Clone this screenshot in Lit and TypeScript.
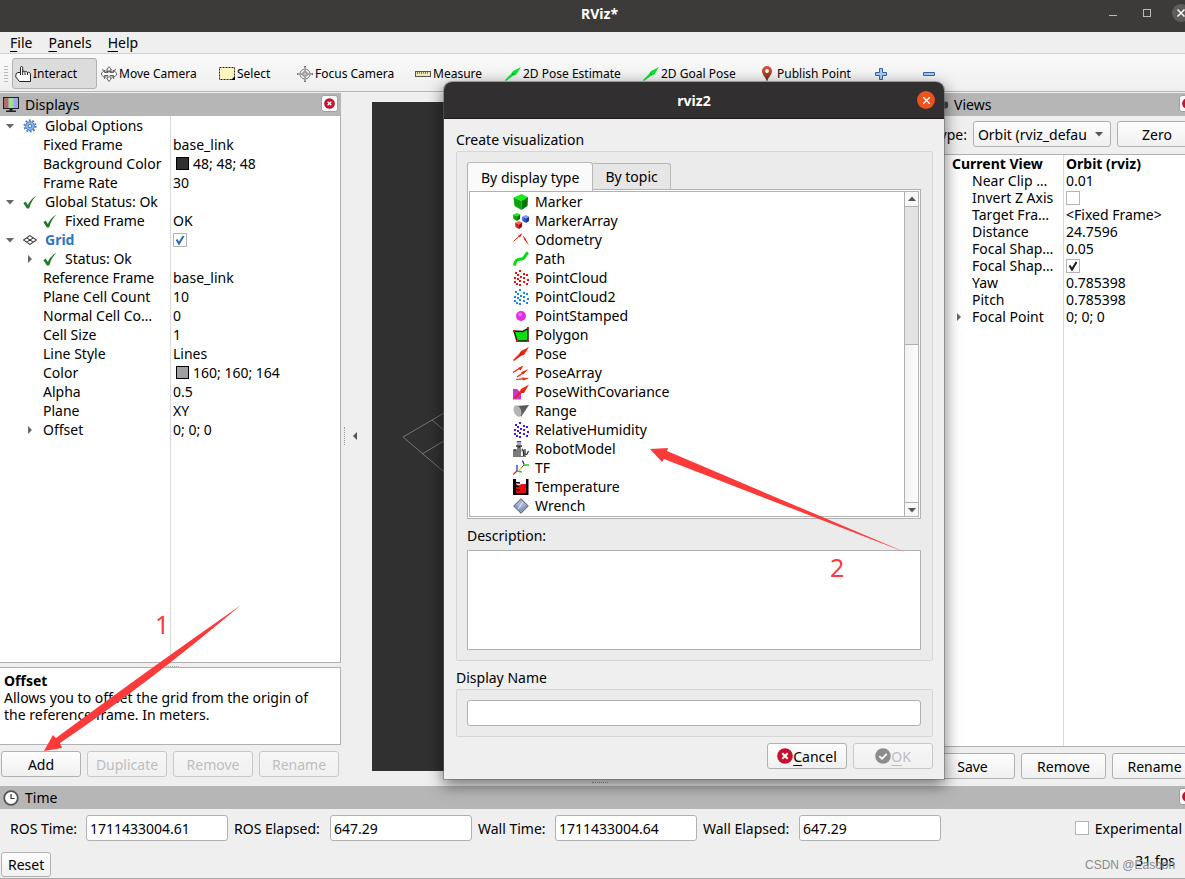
import { LitElement, html, css, svg, nothing, type TemplateResult } from "lit";
import { customElement, property } from "lit/decorators.js";
import { classMap } from "lit/directives/class-map.js";

type Art = TemplateResult;
const icon = (art: Art, box = "0 0 16 16") =>
  html`<svg class="ico" viewBox=${box} aria-hidden="true">${art}</svg>`;

const dots = (color: string): Art =>
  svg`<g fill=${color}>${[
    [7, 1], [3, 3], [11, 4], [5, 5], [14, 5], [8, 7], [2, 8], [11, 8], [5, 9],
    [15, 10], [2, 12], [7, 11], [11, 12], [14, 14], [7, 15], [4, 14],
  ].map(([x, y]) => svg`<rect x=${x - 1} y=${y - 1} width="2" height="2"/>`)}</g>`;

const cube = (x: number, y: number, s: number, a: string, b: string, c: string): Art =>
  svg`<g transform="translate(${x} ${y}) scale(${s})"><path fill=${a} d="M0 3.500 8 0l6.500 3L8 7z"/><path fill=${b} d="M0 3.500 8 7v9l-7-4z"/><path fill=${c} d="M8 7l6.500-4-.5 9-6 4z"/></g>`;

const dart = (color: string): Art =>
  svg`<path fill=${color} d="M0 14 6 8 8 5 16 1 11 9 8.500 9.500 1 15z"/><path stroke="#00000055" fill="none" d="M7 7.500 9 9"/>`;

const art: Record<string, Art> = {
  hand: svg`<path fill="#fff" stroke="#222" stroke-width="1" stroke-linejoin="round" d="M5.500 9V1.800Q5.500.5 6.600.5T7.700 1.800V6Q8 4.800 9 5t1 1.200Q10.500 5 11.500 5.500t.8 1.200Q13 5.800 14.500 6.500 15.500 7 15.500 9v6.500h-11L.8 11V9.500Q.6 7 3 6.500h2.500V9"/><path stroke="#222" d="M7.700 6v3M10 6.500V9M12.500 7v2"/>`,
  move: svg`<g fill="#fff" stroke="#555" stroke-width=".9"><path d="M8 .6 10.500 4H9v2.500h3.500V4.500L15.500 7v2l-3 2.500V9.500H9V12h1.500L8 15.500 5.500 12H7V9.500H3.500v2L.5 9V7l3-2.500v2H7V4H5.500z"/><path fill="none" d="M1 3.500Q8 8 15 3.500M3 13l3-4M13 13l-3-4"/></g>`,
  select: svg`<rect x=".5" y="1.500" width="15" height="12" fill="#fbf4bc" stroke="#222" stroke-dasharray="2 1"/><path d="M16 10v4h-4z"/>`,
  focus: svg`<g fill="none" stroke="#777"><circle cx="8" cy="8" r="5"/><circle cx="8" cy="8" r="2.500"/><path stroke-width="2" d="M8 0v16M0 8h16"/></g><path stroke="#fff" stroke-width=".7" d="M8 1v14M1 8h14"/>`,
  ruler: svg`<rect x=".5" y="5.500" width="15" height="5" fill="#f2e7b3" stroke="#555"/><path stroke="#555" stroke-width=".8" d="M2.500 6v2M4.500 6v1.500M6.500 6v2M8.500 6v1.500M10.500 6v2M12.500 6v1.500"/>`,
  green: dart("#0be335"),
  pin: svg`<defs><linearGradient id="p" x2="0" y2="1"><stop stop-color="#e8553a"/><stop offset="1" stop-color="#5c2a16"/></linearGradient></defs><path fill="url(#p)" d="M8 0a5 5 0 0 1 5 5C13 9 9 11 8 16 7 11 3 9 3 5a5 5 0 0 1 5-5z"/><circle cx="8" cy="5" r="1.900" fill="#fff"/>`,
  plus: svg`<path fill="#a9c8ec" stroke="#3465a4" d="M6.500 2.500h3v4h4v3h-4v4h-3v-4h-4v-3h4z"/>`,
  minus: svg`<path fill="#a9c8ec" stroke="#3465a4" d="M2.500 6.500h11v3h-11z"/>`,
  monitor: svg`<rect x=".5" y=".5" width="15" height="11" fill="#9de09a" stroke="#222"/><path fill="#b56a6a" d="M1 1h4.500v10H1z"/><path fill="#a4a4ec" d="M10.500 1H15v10h-4.500z"/><path fill="#222" d="M6.500 12h3v1.500H13V15H3v-1.500h3.500z"/>`,
  gear: svg`<circle cx="8" cy="8" r="5" fill="#8db5e6" stroke="#3e74b8"/><circle cx="8" cy="8" r="6.500" fill="none" stroke="#3e74b8" stroke-width="2" stroke-dasharray="2.040 2.040"/><circle cx="8" cy="8" r="2" fill="#dcebfb" stroke="#3e74b8"/>`,
  ok: svg`<path fill="#1f7a25" d="M.5 9.500 3 7.500l2.500 4Q9 4 15.500.5 9.500 6 7 15.500H4.500z"/>`,
  grid: svg`<g fill="none" stroke="#333" stroke-width="1.200"><path d="M8 3 15.500 8 8 13 .5 8zM4.300 5.500l7.500 5M11.700 5.500l-7.500 5"/></g>`,
  clock: svg`<circle cx="8" cy="8" r="6.800" fill="#fff" stroke="#555" stroke-width="1.800"/><path fill="none" stroke="#333" stroke-width="1.200" d="M8 4v4.500h3.500"/>`,
  camera: svg`<path fill="#444" d="M1 4.500h12.500q2.500 0 2.500 2v3q0 2-2.500 2H1z"/>`,
  Marker: cube(0.5, 0, 1, "#18ef18", "#0ba50b", "#067506"),
  MarkerArray: svg`${cube(0, 0, 0.5, "#18ef18", "#0ba50b", "#067506")}${cube(9, 2, 0.5, "#7d9cf5", "#2f55d8", "#1a35a0")}${cube(2, 8, 0.5, "#f06a6a", "#d02020", "#8e1010")}`,
  Odometry: svg`<path fill="none" stroke="#e3210f" d="M.5 9.500 8 2.500"/><path fill="#e3210f" d="M5 4 9.500 1 7 5.500zM9.500 3l3 3.500 3.500 7-4.500-5.500z"/>`,
  Path: svg`<path fill="none" stroke="#0bd816" stroke-width="3" d="M1.500 14.500C2.500 6 7 9.500 10 7.500S12 3.500 15 1.500"/>`,
  PointCloud: dots("#f20d0d"),
  PointCloud2: dots("#1787f5"),
  PointStamped: svg`<circle cx="8" cy="8" r="5" fill="#e52be5"/><circle cx="7" cy="6.500" r="2" fill="#f56cf5"/>`,
  Polygon: svg`<path fill="#0be00b" stroke="#111" stroke-width="1.400" d="M1 4 9.500 4.500 15 1.500v12.500H4z"/><path fill="#e11" d="M0 3h2v2H0zM14 0h2v2h-2zM14 13h2v2h-2zM3 13h2v2H3z"/>`,
  Pose: dart("#f0240f"),
  PoseArray: svg`<g stroke="#f0240f" stroke-width="1.200" fill="#f0240f"><path d="M0 7.500 7 3M4 12l6-4M3 14.500l8-.7"/><path stroke="none" d="M5 3 10.500.5 7.500 5.500zM8 7.200 15.500 4 10 9.500zM9 12.500l7 .8-6 2.200z"/></g>`,
  PoseWithCovariance: svg`<path fill="#c936c9" d="M0 5h4l4 4v6.500H0z"/><path fill="#f0240f" d="M1 14 7 7l1-2 8-4.500L11 9H8.500L2 15z"/>`,
  Range: svg`<path fill="#5c5c5c" d="M3 3 16 2 8 14z"/><ellipse cx="4.500" cy="8" rx="3.600" ry="6" fill="#b4b4b4" transform="rotate(-20 4.500 8)"/>`,
  RelativeHumidity: dots("#4a12ee"),
  RobotModel: svg`<path fill="#3556a8" d="M4 0h4l.5 1.500h-5z"/><path fill="#aaa" d="M4 2h4v2H4z"/><path fill="none" stroke="#333" stroke-width="1.300" d="M3 5h6M1 15V9h2v6M5 15V6h2v9M9 8l1.500 2v5M12 8v6l2-1 1.500-3"/><path stroke="#777" stroke-width="1" d="M0 15.500h13M7 10h3"/>`,
  TF: svg`<path fill="none" stroke="#2a2af0" stroke-width="1.300" d="M9.500.5 11 4.500M4 5v6"/><path fill="none" stroke="#17d817" stroke-width="1.300" d="M11 5h5M4 11l5 1"/><path fill="none" stroke="#f02010" stroke-width="1.300" d="m0 14.500 4-3.500"/><path stroke="#e8d020" stroke-width="1.300" d="M6 10l2.500-2.500"/><path stroke="#a22020" d="M8.500 7.500 11 5"/>`,
  Temperature: svg`<path d="M0 0h3v13.500h10V0h2.500v16H0z"/><path fill="#f20808" d="M3 5l2.500 1.500 3-1.500H13v9H3z"/><path stroke="#000" stroke-width="1.500" d="M2 3.500l5 .5M2 7l4 .5M2 10.500l5 .5"/>`,
  Wrench: svg`<path fill="#8d9dbf" stroke="#4b5878" d="M8 .7 15.300 8 8 15.300.7 8z"/><path fill="#b9c5de" d="M8 1.500 3 7l5 3 5-3z" opacity=".6"/><path stroke="#eef" stroke-width="1" d="m5 11 5-7"/>`,
  cross: svg`<circle cx="8" cy="8" r="7.800" fill="#c8102e"/><path stroke="#fff" stroke-width="2" d="m5.300 5.300 5.400 5.400M10.700 5.300 5.300 10.700"/>`,
  accept: svg`<circle cx="8" cy="8" r="7.800" fill="#8c8c8c"/><path fill="none" stroke="#fff" stroke-width="1.800" d="m4.300 8.200 2.700 2.600 4.700-5"/>`,
  x: svg`<path stroke="#fff" stroke-width="1.600" d="m4 4 8 8M12 4l-8 8"/>`,
};

const base = css`
  * { box-sizing: border-box; }
  .ico { width: 16px; height: 16px; flex: none; display: block; }
  button, input, select, textarea { font: inherit; color: inherit; margin: 0; }
  .btn {
    display: flex; align-items: center; justify-content: center;
    height: 26px; padding: 0; border: 1px solid #b1b1b1; border-radius: 3px;
    background: linear-gradient(#fdfdfd, #f0f0f0); white-space: nowrap;
  }
  .btn:disabled { color: #bebebe; border-color: #c8c8c8; background: linear-gradient(#f7f7f7, #f0f0f0); }
  .field { height: 26px; padding: 0 3px; border: 1px solid #b1b1b1; border-radius: 3px; background: #fff; min-width: 0; }
  .check {
    appearance: none; width: 14px; height: 14px; border: 1px solid #b4b4b4;
    background: #fff center / 12px 12px no-repeat; flex: none; display: block;
  }
  .check:checked { background-image: url("data:image/svg+xml,%3Csvg xmlns='http://www.w3.org/2000/svg' viewBox='0 0 12 12'%3E%3Cpath fill='none' stroke='%231a1a1a' stroke-width='2' d='M2.500 5.500 5 9.500 9.500 2'/%3E%3C/svg%3E"); }
  .check.blue:checked { background-image: url("data:image/svg+xml,%3Csvg xmlns='http://www.w3.org/2000/svg' viewBox='0 0 12 12'%3E%3Cpath fill='none' stroke='%232c68b0' stroke-width='2' d='M2.500 5.500 5 9.500 9.500 2'/%3E%3C/svg%3E"); }
`;

@customElement("dock-header")
class DockHeader extends LitElement {
  @property() label = "";
  @property() glyph = "";
  static styles = [base, css`
    :host { display: flex; align-items: center; height: 23px; padding: 0 3px; background: #b6b6b6; }
    h2 { flex: 1; margin: 0 6px; font-size: 14px; font-weight: 400; }
    .close { display: grid; place-items: center; align-self: flex-start; margin-top: 2px; width: 17px; height: 17px; padding: 0; border: 1px solid #a0a0a0; border-radius: 3px; background: #fbfbfb; }
    .close .ico { width: 11px; height: 11px; }
  `];
  render() {
    return html`${icon(art[this.glyph])}<h2>${this.label}</h2>
      <button class="close" aria-label="Close ${this.label}">${icon(art.cross)}</button>`;
  }
}

interface Row {
  name: string; value?: string; depth: number; glyph?: string; open?: boolean;
  swatch?: string; checked?: boolean; style?: string;
}

@customElement("property-tree")
class PropertyTree extends LitElement {
  @property({ attribute: false }) rows: Row[] = [];
  static styles = [base, css`
    :host { display: block; background: linear-gradient(#dadada, #dadada) var(--split) 0 / 1px 100% no-repeat #fff; }
    table { width: 100%; table-layout: fixed; border-collapse: collapse; }
    .first { width: calc(var(--split) + 1px); }
    td, th { height: var(--row); padding: 0; font-weight: 400; text-align: left; line-height: var(--row); }
    .cell { display: flex; align-items: center; height: var(--row); }
    .d1 { padding-left: 20px; }
    .arrow { width: 23px; height: 10px; flex: none; }
    .arrow path { fill: #666; }
    .text { white-space: nowrap; }
    .glyph { width: 22px; flex: none; }
    .glyph .ico { width: 14px; height: 14px; }
    .value { padding-left: 2px; white-space: nowrap; }
    .swatch { width: 13px; height: 13px; border: 1px solid #000; margin: 0 4px 0 3px; }
    .bold { font-weight: 700; }
    .link { font-weight: 700; color: #2a76c6; }
  `];
  render() {
    return html`<table><colgroup><col class="first" /><col /></colgroup><tbody>
      ${this.rows.map((r) => html`<tr>
        <th scope="row"><div class=${classMap({ cell: true, d1: r.depth === 1 })}>
          <svg class="arrow" viewBox="0 0 23 10" aria-hidden="true">
            ${r.open === true ? svg`<path d="M6 3h8l-4 4.500z"/>` : r.open === false ? svg`<path d="M8 1v8l4-4z"/>` : nothing}
          </svg>
          ${r.glyph ? html`<span class="glyph">${icon(art[r.glyph])}</span>` : nothing}
          <span class="text ${r.style ?? ""}">${r.name}</span></div></th>
        <td><div class="cell value ${r.style === "bold" ? "bold" : ""}">
          ${r.swatch ? html`<span class="swatch" style="background:${r.swatch}"></span>` : nothing}
          ${r.checked !== undefined
            ? html`<input class=${classMap({ check: true, blue: r.style === "link" })} type="checkbox" aria-label=${r.name} .checked=${r.checked} />`
            : r.value}</div></td>
      </tr>`)}</tbody></table>`;
  }
}

const displays: Row[] = [
  { name: "Global Options", depth: 0, glyph: "gear", open: true },
  { name: "Fixed Frame", value: "base_link", depth: 1 },
  { name: "Background Color", value: "48; 48; 48", depth: 1, swatch: "#303030" },
  { name: "Frame Rate", value: "30", depth: 1 },
  { name: "Global Status: Ok", depth: 0, glyph: "ok", open: true },
  { name: "Fixed Frame", value: "OK", depth: 1, glyph: "ok" },
  { name: "Grid", depth: 0, glyph: "grid", open: true, checked: true, style: "link" },
  { name: "Status: Ok", depth: 1, glyph: "ok", open: false },
  { name: "Reference Frame", value: "base_link", depth: 1 },
  { name: "Plane Cell Count", value: "10", depth: 1 },
  { name: "Normal Cell Co…", value: "0", depth: 1 },
  { name: "Cell Size", value: "1", depth: 1 },
  { name: "Line Style", value: "Lines", depth: 1 },
  { name: "Color", value: "160; 160; 164", depth: 1, swatch: "#a0a0a4" },
  { name: "Alpha", value: "0.5", depth: 1 },
  { name: "Plane", value: "XY", depth: 1 },
  { name: "Offset", value: "0; 0; 0", depth: 1, open: false },
];

const view: Row[] = [
  { name: "Current View", value: "Orbit (rviz)", depth: 0, style: "bold" },
  { name: "Near Clip …", value: "0.01", depth: 1 },
  { name: "Invert Z Axis", depth: 1, checked: false },
  { name: "Target Fra…", value: "<Fixed Frame>", depth: 1 },
  { name: "Distance", value: "24.7596", depth: 1 },
  { name: "Focal Shap…", value: "0.05", depth: 1 },
  { name: "Focal Shap…", depth: 1, checked: true },
  { name: "Yaw", value: "0.785398", depth: 1 },
  { name: "Pitch", value: "0.785398", depth: 1 },
  { name: "Focal Point", value: "0; 0; 0", depth: 1, open: false },
];

const types = [
  "Marker", "MarkerArray", "Odometry", "Path", "PointCloud", "PointCloud2", "PointStamped", "Polygon", "Pose",
  "PoseArray", "PoseWithCovariance", "Range", "RelativeHumidity", "RobotModel", "TF", "Temperature", "Wrench",
];

@customElement("display-dialog")
class DisplayDialog extends LitElement {
  static styles = [base, css`
    :host { display: block; border-radius: 8px 8px 0 0; background: #efefef; box-shadow: 0 0 0 1px #6a6a6a88, 0 5px 16px 1px #00000088; }
    header { display: grid; grid-template-columns: 1fr auto 1fr; align-items: center; height: 37px; padding: 0 9px; border-radius: 8px 8px 0 0; background: #322f30; border-bottom: 1px solid #1d1b1c; color: #fff; }
    h1 { grid-column: 2; margin: 0; font-size: 14px; font-weight: 700; }
    .shut { justify-self: end; display: grid; place-items: center; width: 18px; height: 18px; padding: 0; border: 0; border-radius: 50%; background: #e95420; }
    .shut .ico { width: 13px; height: 13px; }
    .body { padding: 11px 11px 10px 12px; }
    .legend { display: block; height: 21px; line-height: 19px; }
    .group { padding: 10px 11px 10px 10px; border: 1px solid #d6d6d6; border-radius: 2px; background: #ebebeb; }
    .main { margin-bottom: 6px; }
    .tabs { display: flex; align-items: flex-end; height: 27px; }
    .tab { padding: 0 12px; height: 26px; border: 1px solid #b8b8b8; border-left: 0; border-bottom: 0; border-radius: 0 3px 0 0; background: #e6e6e6; }
    .tab.on { height: 29px; padding: 0 13px; align-self: flex-start; position: relative; border-left: 1px solid #b1b1b1; border-radius: 3px 3px 0 0; background: #fafafa; }
    .list { display: flex; height: 330px; padding: 1px; border: 1px solid #b1b1b1; background: #fff; }
    .inner { display: flex; flex: 1; border: 1px solid #b1b1b1; }
    ul { flex: 1; margin: 0; padding: 0 0 0 43px; list-style: none; }
    li { display: flex; align-items: center; gap: 6px; height: 19px; }
    .bar { display: flex; flex-direction: column; width: 14px; border-left: 1px solid #b1b1b1; background: #e3e3e3; }
    .step { display: grid; place-items: center; height: 13px; padding: 0; border: 0; background: #f8f8f8; }
    .step .ico { width: 8px; height: 8px; }
    .up { height: 15px; border-bottom: 1px solid #b1b1b1; }
    .thumb { height: 159px; margin-top: auto; border: solid #b1b1b1; border-width: 1px 0; background: linear-gradient(90deg, #f1f1f1, #fdfdfd); }
    .desc { height: 31px; line-height: 33px; display: block; }
    textarea { display: block; width: 100%; height: 100px; border: 1px solid #b1b1b1; background: #fff; resize: none; }
    .namelabel { height: 22px; line-height: 22px; display: block; }
    .group .field { display: block; width: 100%; }
    .actions { display: flex; justify-content: flex-end; gap: 6px; margin-top: 6px; }
    .actions .btn { width: 80px; }
    u { text-underline-offset: 3px; }
  `];
  render() {
    return html`<header><h1>rviz2</h1><button class="shut" aria-label="Close">${icon(art.x)}</button></header>
      <div class="body">
        <span class="legend">Create visualization</span>
        <section class="group main">
          <div class="tabs" role="tablist">
            <button class="tab on" role="tab" aria-selected="true">By display type</button>
            <button class="tab" role="tab" aria-selected="false">By topic</button>
          </div>
          <div class="list"><div class="inner">
            <ul>${types.map((t) => html`<li>${icon(art[t])}<span>${t}</span></li>`)}</ul>
            <div class="bar">
              <button class="step up" aria-label="Scroll up">${icon(svg`<path fill="#555" d="M0 6h8L4 1.500z"/>`, "0 0 8 8")}</button>
              <div class="thumb"></div>
              <button class="step" aria-label="Scroll down">${icon(svg`<path fill="#555" d="M0 2h8L4 6.500z"/>`, "0 0 8 8")}</button>
            </div>
          </div></div>
          <label class="desc" for="desc">Description:</label>
          <textarea id="desc" readonly></textarea>
        </section>
        <label class="namelabel" for="name">Display Name</label>
        <section class="group"><input class="field" id="name" type="text" /></section>
        <div class="actions">
          <button class="btn">${icon(art.cross)}<span><u>C</u>ancel</span></button>
          <button class="btn" disabled>${icon(art.accept)}<span><u>O</u>K</span></button>
        </div>
      </div>`;
  }
}

@customElement("app-root")
class AppRoot extends LitElement {
  static styles = [base, css`
    :host { display: block; position: relative; overflow: hidden; font: 14px/17px "Noto Sans", "Open Sans", sans-serif; color: #000; }
    .shell { display: flex; flex-direction: column; width: calc(100% + 14px); min-height: 100vh; background: #efefef; }
    .title { display: grid; grid-template-columns: 1fr auto 1fr; align-items: center; height: 32px; padding: 0 9px 6px; background: #3d3b39; color: #fff; }
    .title h1 { grid-column: 2; margin: 0; font-size: 14px; }
    .wm { display: flex; justify-content: flex-end; gap: 16px; }
    .wm button { width: 18px; height: 18px; padding: 0; border: 0; background: none; }
    .wm .ico { width: 18px; height: 18px; }
    .menu { display: flex; gap: 16px; height: 22px; padding: 0 10px; align-items: center; border-bottom: 1px solid #d0d0d0; }
    .menu a { color: inherit; text-decoration: none; }
    u { text-underline-offset: 3px; }
    .tools { display: grid; grid-template-columns: 12px 86px 118px 78px 118px 90px 138px 116px 114px 48px 48px; align-items: start; height: 38px; padding-top: 4px; border-bottom: 1px solid #b4b4b4; background: linear-gradient(#fafafa, #efefef); font-size: 12px; }
    .grip { width: 4px; height: 18px; margin: 7px 0 0 4px; background: radial-gradient(circle, #bbb 1px, transparent 1px) 0 0 / 2px 3px; }
    .tool { display: flex; align-items: center; gap: 2px; height: 31px; margin-right: 1px; padding: 0 2px; border: 1px solid transparent; border-radius: 3px; background: none; white-space: nowrap; }
    .tool.on { background: #dcdcdc; border-color: #b1b1b1; }
    .work { flex: 1; display: flex; padding-top: 1px; }
    .left { display: flex; flex-direction: column; width: 341px; }
    .left property-tree { flex: 1; --split: 170px; --row: 19px; border: solid #b1b1b1; border-width: 0 1px 1px 0; }
    .hgrip { height: 4px; width: 16px; align-self: center; border-bottom: 1px dotted #aaa; }
    .help { height: 78px; padding: 4px 16px 4px 4px; border: 1px solid #b1b1b1; border-left: 0; background: #fff; }
    .help p, .help h3 { margin: 0; font-size: 14px; }
    .row { display: grid; grid-template-columns: repeat(4, 1fr); gap: 6px; padding: 6px 2px 2px 1px; }
    .side { display: flex; align-items: center; gap: 6px; width: 31px; padding: 0 5px 0 3px; }
    .vgrip { height: 18px; width: 1px; border-left: 1px dotted #999; }
    .side .ico { width: 8px; height: 8px; }
    .scene { flex: 1; margin: 9px 10px 8px 0; background: #303030; }
    .scene svg { display: block; width: 200px; height: 400px; margin-left: 31px; margin-top: 210px; }
    .right { display: flex; flex-direction: column; width: 270px; }
    .type { display: flex; align-items: center; gap: 6px; padding: 5px 2px 7px 3px; }
    .type select { appearance: none; width: 138px; padding: 0 23px 0 4px; text-overflow: clip; border: 1px solid #b1b1b1; border-radius: 3px; height: 26px;
      background: url("data:image/svg+xml,%3Csvg xmlns='http://www.w3.org/2000/svg' viewBox='0 0 8 8'%3E%3Cpath fill='%23555' d='M0 2h8L4 6.500z'/%3E%3C/svg%3E") right 7px center / 8px 8px no-repeat, linear-gradient(#fdfdfd, #f0f0f0); }
    .type .btn { flex: 1; }
    .right property-tree { flex: 1; --split: 134px; --row: 17px; border: solid #b1b1b1; border-width: 1px 0; }
    .right .row { grid-template-columns: repeat(3, 1fr); padding: 6px 2px 0 1px; }
    .sep { height: 7px; display: grid; place-items: center; }
    .sep span { width: 16px; border-bottom: 1px dotted #999; }
    .time { display: grid; grid-template-columns: 70px 142px 90px 142px 71px 142px 90px 142px 1fr; align-items: center; gap: 6px; padding: 6px 17px 0 10px; }
    .time label { white-space: nowrap; }
    .time .exp { display: flex; align-items: center; gap: 6px; justify-self: end; }
    .status { display: flex; align-items: flex-start; justify-content: space-between; height: 38px; padding: 11px 24px 0 1px; border-bottom: 1px solid #a8a8a8; }
    .status .btn { padding: 0 6px; height: 25px; }
    .popup { position: absolute; left: 444px; top: 82px; width: 500px; }
    .notes { position: absolute; left: 0; top: 0; width: 1185px; height: 879px; pointer-events: none; }
    .notes path { fill: #fd3a3a; }
    .num { fill: #fd3a3a; font-size: 25px; }
    .mark { fill: #8a8a8a; font: 12px "Liberation Sans", sans-serif; }
  `];
  render() {
    const tools: [string, string][] = [
      ["hand", "Interact"], ["move", "Move Camera"], ["select", "Select"], ["focus", "Focus Camera"], ["ruler", "Measure"],
      ["green", "2D Pose Estimate"], ["green", "2D Goal Pose"], ["pin", "Publish Point"], ["plus", ""], ["minus", ""],
    ];
    const times = [["ROS Time:", "1711433004.61"], ["ROS Elapsed:", "647.29"], ["Wall Time:", "1711433004.64"], ["Wall Elapsed:", "647.29"]];
    return html`
      <div class="shell">
        <header class="title"><h1>RViz*</h1>
          <div class="wm">
            <button aria-label="Minimize">${icon(svg`<path stroke="#bbb" d="M5 11.500h8"/>`, "0 0 18 18")}</button>
            <button aria-label="Maximize">${icon(svg`<rect x="5.500" y="5.500" width="7" height="7" fill="none" stroke="#bbb"/>`, "0 0 18 18")}</button>
            <button aria-label="Close">${icon(svg`<circle cx="9" cy="9" r="9" fill="#5f5d5b"/><path stroke="#fff" stroke-width="1.500" d="m5.500 5.500 7 7M12.500 5.500l-7 7"/>`, "0 0 18 18")}</button>
          </div>
        </header>
        <nav class="menu"><a href="#file"><u>F</u>ile</a><a href="#panels"><u>P</u>anels</a><a href="#help"><u>H</u>elp</a></nav>
        <div class="tools" role="toolbar"><span class="grip"></span>
          ${tools.map(([g, t], i) => html`<button class="tool ${i === 0 ? "on" : ""}" aria-label=${t || g}>${icon(art[g])}${t}</button>`)}
        </div>
        <main class="work">
          <section class="left">
            <dock-header label="Displays" glyph="monitor"></dock-header>
            <property-tree .rows=${displays}></property-tree>
            <div class="hgrip"></div>
            <div class="help"><h3>Offset</h3><p>Allows you to offset the grid from the origin of the reference frame. In meters.</p></div>
            <div class="row"><button class="btn">Add</button><button class="btn" disabled>Duplicate</button><button class="btn" disabled>Remove</button><button class="btn" disabled>Rename</button></div>
          </section>
          <div class="side"><span class="vgrip"></span>${icon(svg`<path fill="#555" d="M6 0v8L2 4z"/>`, "0 0 8 8")}</div>
          <div class="scene"><svg viewBox="0 0 200 400" aria-hidden="true"><path fill="none" stroke="#747476" d="M200 8 160 20 41 101 0 125 80 193M29 108l90 76M19 142 140 70"/></svg></div>
          <section class="right">
            <dock-header label="Views" glyph="camera"></dock-header>
            <div class="type"><label for="vt">Type:</label>
              <select id="vt"><option>Orbit (rviz_default_plugins)</option></select><button class="btn">Zero</button></div>
            <property-tree .rows=${view}></property-tree>
            <div class="row"><button class="btn">Save</button><button class="btn">Remove</button><button class="btn">Rename</button></div>
          </section>
        </main>
        <div class="sep"><span></span></div>
        <dock-header label="Time" glyph="clock"></dock-header>
        <section class="time">
          ${times.map(([l, v], i) => html`<label for="t${i}">${l}</label><input class="field" id="t${i}" type="text" readonly .value=${v} />`)}
          <label class="exp"><input class="check" type="checkbox" />Experimental</label>
        </section>
        <footer class="status"><button class="btn">Reset</button><span>31 fps</span></footer>
      </div>
      <display-dialog class="popup" role="dialog" aria-label="rviz2"></display-dialog>
      <svg class="notes" viewBox="0 0 1185 879">
        <path d="M44 751 53 735 56 738Q145 672 241 605 150 682 60 743L62 748z"/>
        <path d="M650 449 668 448 667 451 907 553 664 459 662 462z"/>
        <text class="num" x="155" y="634">1</text>
        <text class="num" x="830" y="577">2</text>
        <text class="mark" x="1085" y="869">CSDN @Easoon</text>
      </svg>`;
  }
}
